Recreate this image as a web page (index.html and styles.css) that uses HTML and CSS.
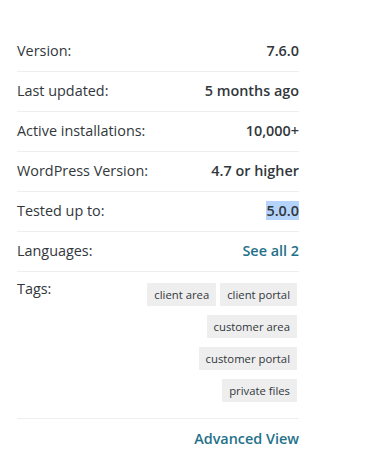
FILE: index.html
```html
<!DOCTYPE html>
<html>
<head>
<meta charset="utf-8">
<link rel="stylesheet" href="styles.css">
</head>
<body>
<div class="meta">
  <ul class="list">
    <li class="row"><span class="label">Version:</span><strong class="value">7.6.0</strong></li>
    <li class="row"><span class="label">Last updated:</span><strong class="value">5 months ago</strong></li>
    <li class="row"><span class="label">Active installations:</span><strong class="value">10,000+</strong></li>
    <li class="row"><span class="label">WordPress Version:</span><strong class="value">4.7 or higher</strong></li>
    <li class="row"><span class="label">Tested up to:</span><strong class="value"><span class="selected">5.0.0</span></strong></li>
    <li class="row"><span class="label">Languages:</span><a class="value link" href="#">See all 2</a></li>
    <li class="row tags-row">
      <span class="label">Tags:</span>
      <div class="tags">
        <a class="tag" href="#">client area</a>
        <a class="tag" href="#">client portal</a>
        <a class="tag" href="#">customer area</a>
        <a class="tag" href="#">customer portal</a>
        <a class="tag" href="#">private files</a>
      </div>
    </li>
  </ul>
  <div class="advanced"><a class="link" href="#">Advanced View</a></div>
</div>
</body>
</html>
```
FILE: styles.css
```css
html, body {
  margin: 0;
  padding: 0;
  background: #fff;
}
body {
  font-family: "Open Sans", "Noto Sans", sans-serif;
  font-size: 14.4px;
  line-height: 20px;
  color: #32373c;
}
.meta {
  width: 282px;
  margin-left: 17px;
  padding-top: 32px;
}
.list {
  list-style: none;
  margin: 0;
  padding: 0;
}
.row {
  display: flex;
  justify-content: space-between;
  align-items: flex-start;
  padding: 9px 0 10px;
  border-bottom: 1px solid #eeeeee;
}
.value {
  font-weight: 600;
}
.selected {
  background: #b4d4fb;
}
.link {
  color: #1f7189;
  font-weight: 600;
  text-decoration: none;
}
.tags-row {
  padding: 7px 0 16px;
}
.tags {
  width: 164px;
  margin-top: 4px;
  padding-right: 2px;
  display: flex;
  flex-wrap: wrap;
  justify-content: flex-end;
  gap: 9px 4px;
}
.tag {
  display: block;
  background: #eeeeee;
  color: #32373c;
  text-decoration: none;
  font-size: 11.3px;
  line-height: 17px;
  padding: 3px 7px;
  border-radius: 1px;
}
.advanced {
  display: flex;
  justify-content: flex-end;
  margin-top: 10px;
}
```
